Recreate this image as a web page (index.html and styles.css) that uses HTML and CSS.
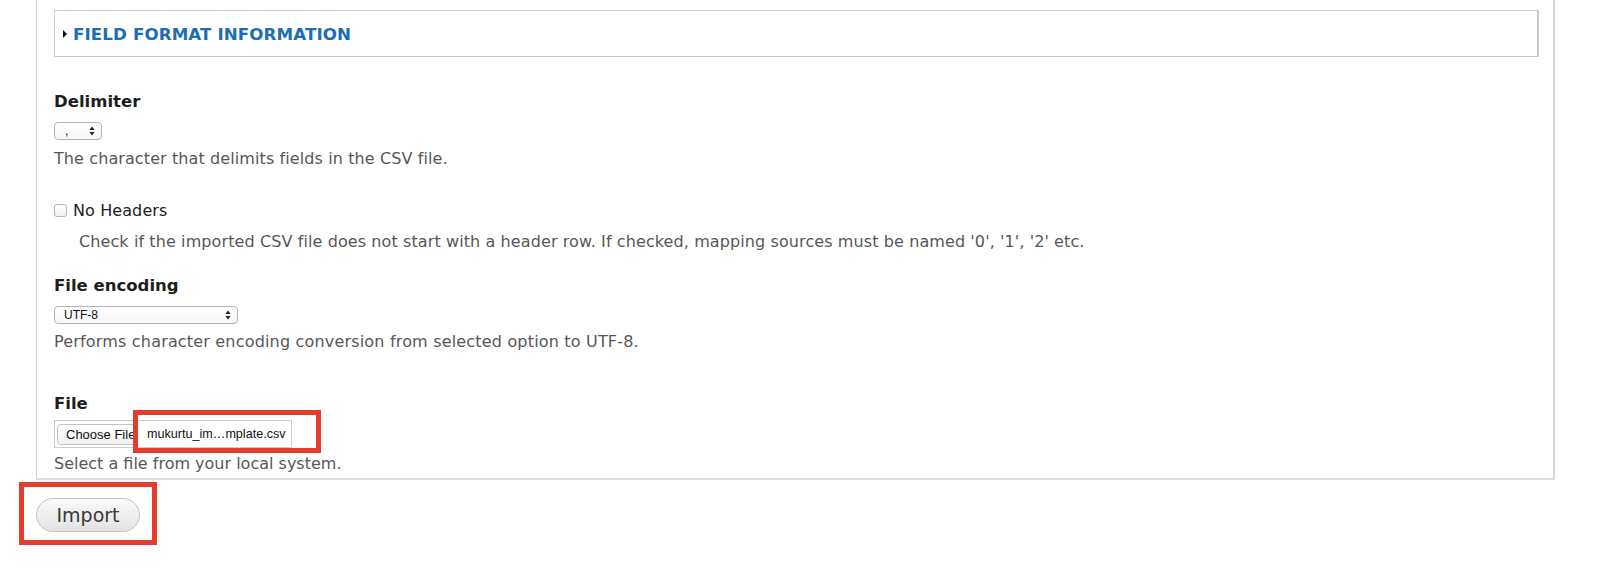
FILE: index.html
```html
<!DOCTYPE html>
<html lang="en">
<head>
<meta charset="utf-8">
<title>Import</title>
<link rel="stylesheet" href="styles.css">
</head>
<body>
<div class="page">
  <div class="panel">
    <div class="collapsible">
      <span class="tri"></span>
      <span class="collapsible-title">FIELD FORMAT INFORMATION</span>
    </div>

    <div class="field field-delimiter">
      <div class="label">Delimiter</div>
      <div class="select select-small">
        <span class="select-value">,</span>
        <svg class="arrows" width="6" height="10" viewBox="0 0 6 10"><path d="M3 0.5 L5.6 4 L0.4 4 Z M3 9.5 L5.6 6 L0.4 6 Z" fill="#222"/></svg>
      </div>
      <div class="desc">The character that delimits fields in the CSV file.</div>
    </div>

    <div class="field field-check">
      <div class="check-row">
        <span class="checkbox"></span>
        <span class="check-label">No Headers</span>
      </div>
      <div class="desc desc-indent">Check if the imported CSV file does not start with a header row. If checked, mapping sources must be named '0', '1', '2' etc.</div>
    </div>

    <div class="field field-encoding">
      <div class="label">File encoding</div>
      <div class="select select-wide">
        <span class="select-value select-text">UTF-8</span>
        <svg class="arrows" width="6" height="10" viewBox="0 0 6 10"><path d="M3 0.5 L5.6 4 L0.4 4 Z M3 9.5 L5.6 6 L0.4 6 Z" fill="#222"/></svg>
      </div>
      <div class="desc">Performs character encoding conversion from selected option to UTF-8.</div>
    </div>

    <div class="field field-file">
      <div class="label">File</div>
      <div class="file-input">
        <span class="choose-btn">Choose File</span>
        <span class="file-name">mukurtu_im…mplate.csv</span>
        <span class="mark mark-file"></span>
      </div>
      <div class="desc">Select a file from your local system.</div>
    </div>
  </div>

  <div class="actions">
    <span class="import-btn">Import</span>
    <span class="mark mark-import"></span>
  </div>
</div>
</body>
</html>
```

FILE: styles.css
```css
html, body {
  margin: 0;
  padding: 0;
  background: #fff;
}

body {
  font-family: "DejaVu Sans", "Liberation Sans", sans-serif;
  font-size: 16px;
  line-height: 20px;
  color: #222;
}

.page {
  padding-left: 36px;
  padding-right: 45px;
}

.panel {
  border-left: 1px solid #cfcfcf;
  border-right: 2px solid #d6d6d6;
  border-bottom: 2px solid #dcdcdc;
  padding: 10px 14px 4px 17px;
}

.collapsible {
  height: 45px;
  border: 1px solid #cbcbcb;
  border-right-width: 2px;
  display: flex;
  align-items: center;
  padding-left: 8px;
}

.tri {
  width: 0;
  height: 0;
  border-top: 4px solid transparent;
  border-bottom: 4px solid transparent;
  border-left: 4px solid #111;
  margin-right: 6px;
  margin-top: 1px;
}

.collapsible-title {
  color: #1b6db7;
  font-weight: bold;
  font-size: 16.7px;
  letter-spacing: 0.1px;
}

.label {
  font-weight: bold;
  font-size: 16.5px;
  color: #1d1d1d;
}

.desc {
  color: #575757;
  letter-spacing: 0.1px;
  white-space: nowrap;
}

.desc-indent {
  padding-left: 25px;
  margin-top: 11px;
}

.field-delimiter { margin-top: 35px; }
.field-check { margin-top: 32px; }
.field-encoding { margin-top: 24px; }
.field-file { margin-top: 42px; }

.field-encoding .desc { letter-spacing: 0.18px; }
.field-file .desc { letter-spacing: 0; }

.select {
  position: relative;
  height: 16px;
  border: 1px solid #b4b4b4;
  border-radius: 4px;
  background: linear-gradient(#ffffff, #f6f6f6);
  display: flex;
  align-items: center;
  margin-top: 10px;
  margin-bottom: 9px;
  box-sizing: content-box;
}

.select-small { width: 46px; }
.select-wide { width: 182px; margin-bottom: 8px; }

.select-value {
  font-family: "Liberation Sans", Arial, sans-serif;
  font-size: 12px;
  line-height: 16px;
  color: #111;
  padding-left: 10px;
  flex: 1;
}

.select-text { padding-left: 9px; }

.arrows {
  margin-right: 6px;
}

.check-row {
  display: flex;
  align-items: flex-start;
}

.checkbox {
  width: 11px;
  height: 11px;
  border: 1px solid #b3b3b3;
  border-radius: 3px;
  background: linear-gradient(#ffffff, #f2f2f2);
  margin-top: 3px;
  margin-right: 6px;
}

.check-label {
  color: #222;
  letter-spacing: 0.1px;
}

.file-input {
  position: relative;
  width: 236px;
  height: 26px;
  border: 1px solid #cdcdcd;
  margin-top: 6px;
  margin-bottom: 6px;
  display: flex;
  align-items: center;
  font-family: "Liberation Sans", Arial, sans-serif;
  font-size: 13px;
  color: #111;
  white-space: nowrap;
}

.choose-btn {
  flex-shrink: 0;
  margin-left: 2px;
  width: 70px;
  height: 19px;
  border: 1px solid #c3c3c3;
  border-radius: 4px;
  background: linear-gradient(#ffffff, #f1f1f1);
  line-height: 19px;
  padding-left: 8px;
  box-sizing: content-box;
  white-space: nowrap;
  overflow: hidden;
}

.file-name {
  flex-shrink: 0;
  margin-left: 10px;
  font-size: 12.6px;
  white-space: nowrap;
}

.mark {
  position: absolute;
  border: 5px solid #e53c2d;
  pointer-events: none;
}

.mark-file {
  left: 78px;
  top: -11px;
  width: 178px;
  height: 33px;
}

.actions {
  position: relative;
  padding-top: 18px;
  height: 60px;
}

.import-btn {
  display: inline-block;
  width: 102px;
  height: 32px;
  border: 1px solid #c4c4c4;
  border-radius: 17px;
  background: linear-gradient(#fbfbfb, #e2e2e2);
  font-size: 19px;
  line-height: 32px;
  text-align: center;
  color: #3a3a3a;
}

.mark-import {
  left: -17px;
  top: 2px;
  width: 128px;
  height: 53px;
}
```
